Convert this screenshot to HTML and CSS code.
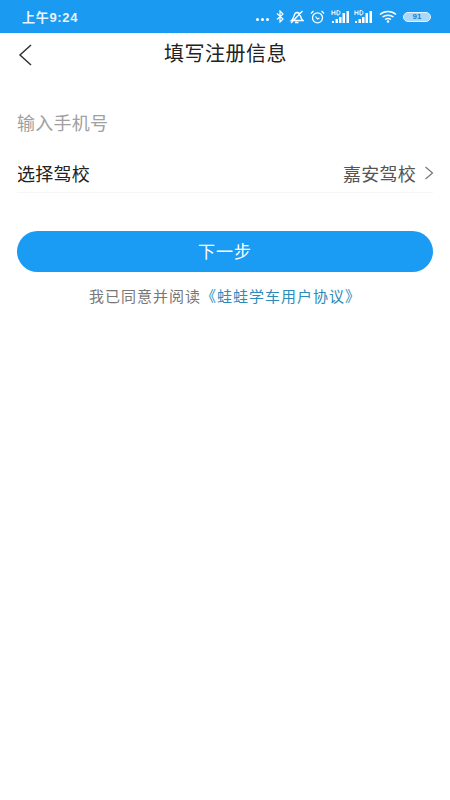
FILE: index.html
```html
<!DOCTYPE html>
<html lang="zh-CN">
<head>
    <meta charset="UTF-8">
    <meta name="viewport" content="width=device-width, initial-scale=1.0">
    <title>填写注册信息</title>
    <link rel="stylesheet" href="styles.css">
</head>
<body>
    <div class="status-bar">
        <span class="status-time">上午9:24</span>
        <div class="status-icons">
            <span class="status-dots"><i></i><i></i><i></i></span>
            <!-- bluetooth -->
            <svg class="icon" width="9" height="13" viewBox="0 0 9 13"><path d="M1 3.500l6 5.500-3 3V1l3 3-6 5.500" fill="none" stroke="#fff" stroke-width="1.200"/></svg>
            <!-- muted bell -->
            <svg class="icon" width="15" height="14" viewBox="0 0 15 14"><path d="M2.500 10.500c1.500-1 2-2.500 2.500-4.500s1.500-3.500 3-3.500 3 1.500 3.500 3.500c.4 2 1 3.500 2.500 4.500zM6 12.500h3.500M2 13L13.500 1" fill="none" stroke="#fff" stroke-width="1.300"/></svg>
            <!-- alarm -->
            <svg class="icon icon-alarm" width="15" height="14" viewBox="0 0 15 14"><circle cx="7.500" cy="7.800" r="5" fill="none" stroke="#fff" stroke-width="1.300"/><path d="M5.500 6.500l2 2.500 2-1M1 3.500L3.500 1M14 3.500L11.500 1" fill="none" stroke="#fff" stroke-width="1.200"/></svg>
            <!-- signal, twice -->
            <svg class="icon" width="19" height="14" viewBox="0 0 19 14"><path d="M1 .5v4.500M4 .5v4.500M1 2.700h3M6 .5v4.500c2 0 3-.5 3-2.300S8 .5 6 .5z" fill="none" stroke="#fff" stroke-width="1"/><path d="M1 11h2v2H1zM4.500 9h2.500v4H4.500zM8 7h2.500v6H8zM11.500 3h2.500v10h-2.500zM15.500 1h2.500v12h-2.500z" fill="#fff"/></svg>
            <svg class="icon" width="19" height="14" viewBox="0 0 19 14"><path d="M1 .5v4.500M4 .5v4.500M1 2.700h3M6 .5v4.500c2 0 3-.5 3-2.300S8 .5 6 .5z" fill="none" stroke="#fff" stroke-width="1"/><path d="M1 11h2v2H1zM4.500 9h2.500v4H4.500zM8 7h2.500v6H8zM11.500 3h2.500v10h-2.500zM15.500 1h2.500v12h-2.500z" fill="#fff"/></svg>
            <!-- wifi -->
            <svg class="icon icon-wifi" width="18" height="13" viewBox="0 0 18 13"><path d="M1 4.500c4.500-4 11.500-4 16 0M3.500 7c3-2.500 8-2.500 11 0M6 9.500c1.800-1.300 4.200-1.300 6 0" fill="none" stroke="#fff" stroke-width="1.500"/><circle cx="9" cy="11.500" r="1.300" fill="#fff"/></svg>
            <span class="battery"><span class="battery-level">91</span></span>
        </div>
    </div>

    <header class="nav-bar">
        <svg class="back-icon" width="14" height="22" viewBox="0 0 14 22"><path d="M13 1L2 11l11 10" fill="none" stroke="#333" stroke-width="1.500"/></svg>
        <h1 class="nav-title">填写注册信息</h1>
    </header>

    <main class="register-form">
        <div class="form-row phone-row">
            <span class="placeholder">输入手机号</span>
        </div>
        <div class="form-row school-row">
            <span class="row-label">选择驾校</span>
            <span class="row-value">嘉安驾校
                <svg class="chevron" width="10" height="14" viewBox="0 0 10 14"><path d="M1.500 1l7 6-7 6" fill="none" stroke="#777" stroke-width="1.200"/></svg>
            </span>
        </div>

        <button class="next-btn" type="button">下一步</button>

        <p class="agreement">我已同意并阅读<a class="agreement-link">《蛙蛙学车用户协议》</a></p>
    </main>
</body>
</html>
```

FILE: styles.css
```css
* {
    box-sizing: border-box;
}

body {
    margin: 0;
    min-height: 100vh;
    background-color: #ffffff;
    color: #222222;
    font-family: "Liberation Sans", "Noto Sans CJK SC", sans-serif;
}

.status-bar {
    display: flex;
    justify-content: space-between;
    align-items: center;
    height: 33px;
    padding: 0 19px 0 22px;
    background-color: #1b9af2;
    color: #ffffff;
}

.status-time {
    font-size: 13px;
    font-weight: bold;
    letter-spacing: 0.7px;
    opacity: 0.9;
}

.status-icons {
    display: flex;
    align-items: center;
    gap: 4px;
}

.status-dots {
    display: flex;
    gap: 2px;
    margin-top: 5px;
    margin-right: 3px;
}

.status-dots i {
    width: 3px;
    height: 3px;
    border-radius: 50%;
    background-color: #ffffff;
}

.icon {
    display: block;
}

.icon-alarm {
    margin: 0 2px;
}

.icon-wifi {
    margin: 0 2px;
}

.battery {
    display: flex;
    justify-content: center;
    align-items: center;
    width: 28px;
    height: 10px;
    border: 1px solid #e3f2fe;
    border-radius: 5px;
    background-color: #a9d8fa;
}

.battery-level {
    color: #1b7fc9;
    font-size: 8px;
    font-weight: bold;
    line-height: 1;
}

.nav-bar {
    display: flex;
    justify-content: center;
    align-items: center;
    position: relative;
    height: 39px;
}

.back-icon {
    position: absolute;
    left: 18px;
    top: 11px;
}

.nav-title {
    margin: 0 0 0 1px;
    font-size: 20px;
    font-weight: normal;
    letter-spacing: 0.500px;
    color: #222222;
}

.register-form {
    padding: 0 17px;
}

.form-row {
    display: flex;
    justify-content: space-between;
    align-items: center;
    font-size: 18px;
    letter-spacing: 0.250px;
}

.phone-row {
    height: 48px;
    margin-top: 26px;
    margin-bottom: 8px;
}

.placeholder {
    color: #a0a0a0;
}

.school-row {
    height: 39px;
    padding-bottom: 1px;
    border-bottom: 1px solid #f6f6f6;
}

.row-label {
    color: #222222;
}

.row-value {
    display: flex;
    align-items: center;
    gap: 8px;
    color: #555555;
}

.chevron {
    margin-right: -1px;
}

.next-btn {
    display: block;
    width: 100%;
    height: 41px;
    margin-top: 38px;
    padding-bottom: 3px;
    border: none;
    border-radius: 21px;
    background-color: #1b9cf4;
    color: #ffffff;
    font-family: inherit;
    font-size: 17px;
    letter-spacing: 1px;
}

.agreement {
    margin: 13px 0 0;
    text-align: center;
    font-size: 15px;
    letter-spacing: 1px;
    color: #777777;
}

.agreement-link {
    color: #2b8cbc;
}
```
